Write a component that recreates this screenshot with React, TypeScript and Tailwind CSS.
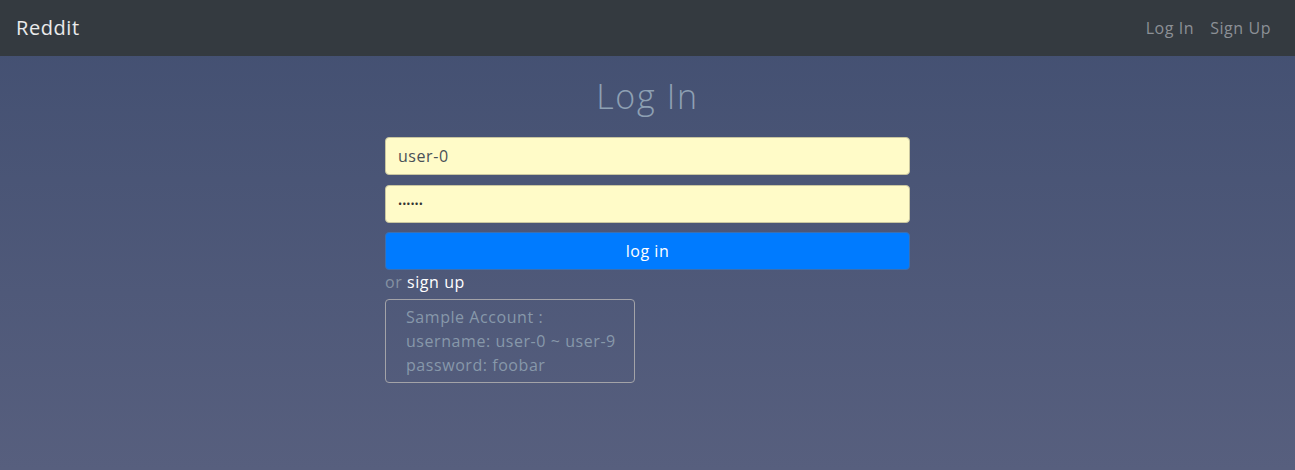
export default function App() {
  return (
    <div
      className="min-h-screen flex flex-col bg-gradient-to-b from-[#424f71] to-[#575f7e] tracking-[0.035em]"
      style={{ fontFamily: '"Open Sans", sans-serif' }}
    >
      <nav className="h-[56px] bg-[#343a40] flex items-center justify-between px-4">
        <span className="text-[20px] text-white/90 leading-none">Reddit</span>
        <div className="flex text-[16px] text-[#8c9096]">
          <span className="px-2">Log In</span>
          <span className="px-2">Sign Up</span>
        </div>
      </nav>
      <div className="w-[525px] mx-auto flex flex-col">
        <h1 className="text-[34px] font-light text-[#8ea0b3] text-center mt-[17px] mb-[18px] leading-[46px] tracking-[0.05em]">
          Log In
        </h1>
        <div className="h-[38px] rounded bg-[#fffbc8] border border-[#c9c6a0] flex items-center px-3 text-[16px] text-[#495057]">
          user-0
        </div>
        <div className="h-[38px] mt-[10px] rounded bg-[#fffbc8] border border-[#c9c6a0] flex items-center px-3 text-[11px] text-[#333] tracking-[0px]">
          ••••••
        </div>
        <div className="h-[38px] mt-[9px] rounded bg-[#007bff] border border-[#3b6fb0] flex items-center justify-center text-[16px] text-white">
          log in
        </div>
        <div className="text-[16px] leading-[24px]">
          <span className="text-[#8592a3]">or </span>
          <span className="text-white">sign up</span>
        </div>
        <div className="mt-[5px] w-[250px] border border-[#a3a3a8] rounded px-5 py-[5px] text-[16px] leading-[24px] text-[#8798aa] whitespace-nowrap">
          <div>Sample Account :</div>
          <div>username: user-0 ~ user-9</div>
          <div>password: foobar</div>
        </div>
      </div>
    </div>
  );
}
